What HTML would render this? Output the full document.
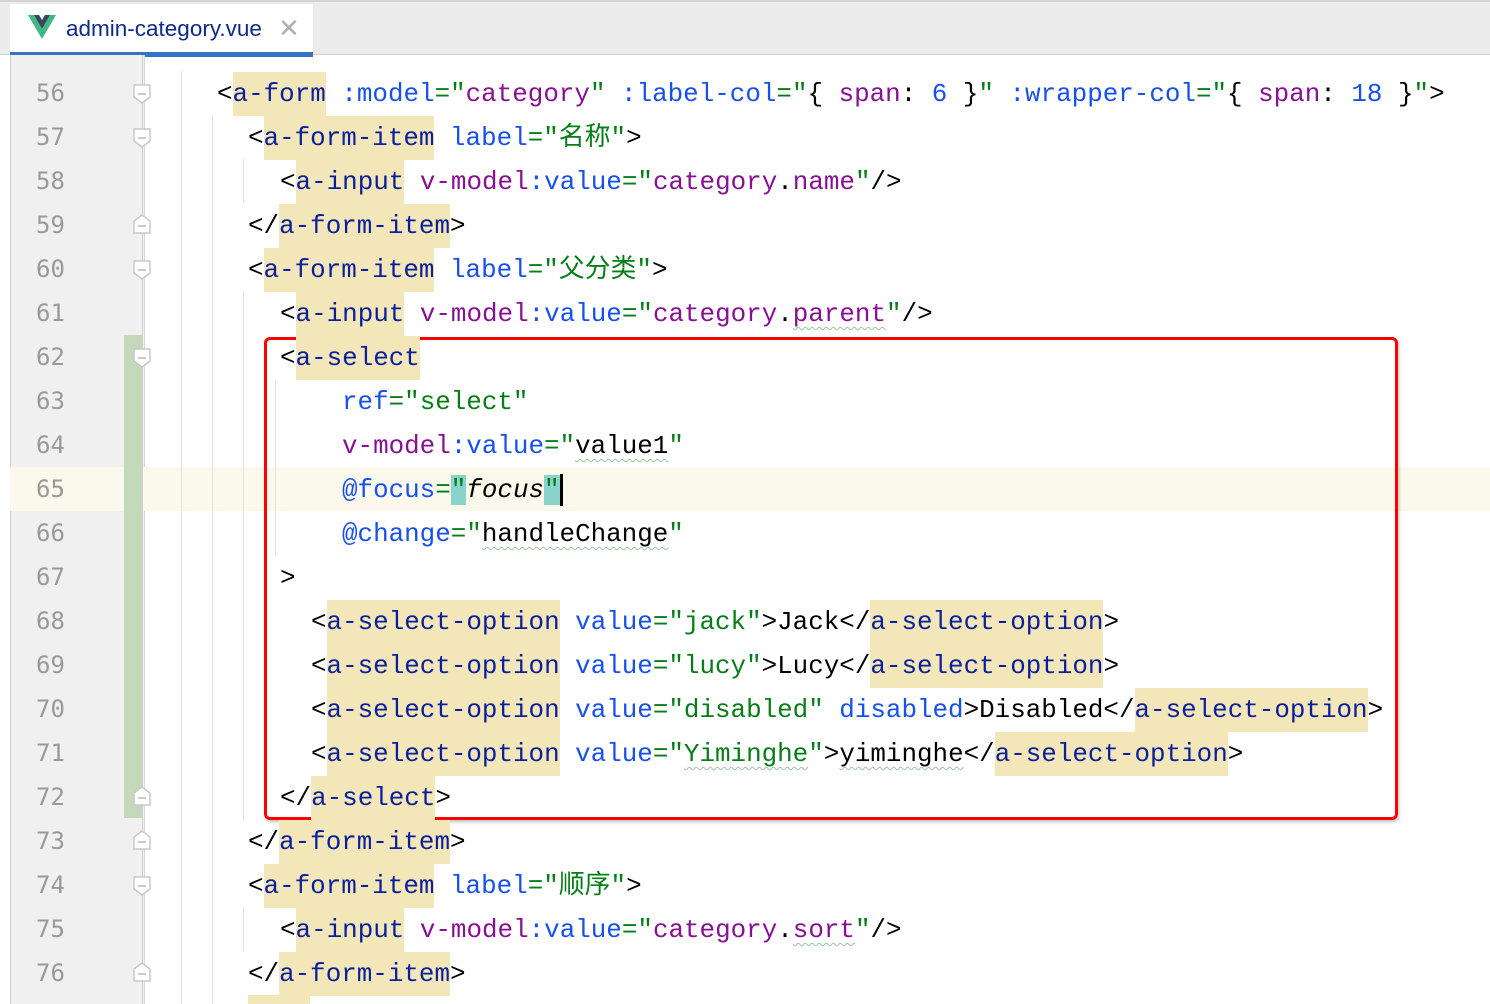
<!DOCTYPE html>
<html><head><meta charset="utf-8"><style>
body{margin:0;width:1490px;height:1004px;overflow:hidden;background:#fff;position:relative;font-family:"Liberation Mono","Noto Sans CJK SC",monospace;}
.tabbar{position:absolute;left:0;top:0;width:1490px;height:55px;background:#ececec;border-top:2px solid #d4d4d4;box-sizing:border-box;border-bottom:1px solid #d0d0d0}
.tab{position:absolute;left:10px;top:2px;width:303px;height:53px;background:#fff;border-bottom:5px solid #3572c6;box-sizing:border-box}
.tab .name{position:absolute;left:56px;top:12px;font-family:"Liberation Sans",sans-serif;font-size:22.5px;color:#0d2a8a}
.tab .x{position:absolute;left:268px;top:9px;font-family:"Liberation Sans",sans-serif;font-size:26px;color:#b0b0b0}
.gutter{position:absolute;left:10px;top:55px;width:133px;height:949px;background:#f0f0f0;border-left:1px solid #cfcfcf;border-right:1px solid #d8d8d8}
.cur{position:absolute;left:10px;top:467px;width:1480px;height:44px;background:#fbf9ec}
.chg{position:absolute;left:124px;top:335px;width:18px;height:483px;background:#c3d9b9}
.ln{position:absolute;left:36px;font-size:24px;color:#999;line-height:44px;font-family:"DejaVu Sans Mono",monospace}
.code{position:absolute;font-size:25.9px;line-height:44px;white-space:pre;color:#000;margin-top:1px}
.t{color:#0a1f9c;background:#f3e6b8;display:inline-block;height:44px}
.a{color:#1750eb}.s{color:#067d17}.p{color:#871094}.n{color:#1750eb}
.w{text-decoration:underline wavy #9bc49b;text-decoration-thickness:1px;text-underline-offset:5px}
.g{position:absolute;width:1px;background:#e2e2e2}
.box{position:absolute;left:264px;top:337px;width:1134px;height:483px;border:3px solid #f00;border-radius:6px;box-sizing:border-box;box-shadow:1px 2px 3px rgba(0,0,0,.25)}
</style></head><body>
<div class="tabbar"><div class="tab">
<svg style="position:absolute;left:18px;top:11px" width="28" height="24" viewBox="0 0 28 24"><path d="M0 0h6l8 14 8-14h6L14 24z" fill="#41b883"/><path d="M6 0h5l3 5 3-5h5L14 14z" fill="#34495e"/></svg>
<span class="name">admin-category.vue</span><span class="x">✕</span></div></div>
<div class="gutter"></div>
<div class="cur"></div>
<div class="chg"></div>
<div style="position:absolute;left:142px;top:55px;width:1px;height:949px;background:#d0d0d0"></div>
<div class="g" style="left:181px;top:71px;height:933px"></div>
<div class="g" style="left:212px;top:115px;height:889px"></div>
<div class="g" style="left:243px;top:159px;height:44px"></div>
<div class="g" style="left:243px;top:291px;height:530px"></div>
<div class="g" style="left:275px;top:380px;height:176px"></div>
<div class="g" style="left:243px;top:907px;height:44px"></div>
<div class="box"></div>

<div class="ln" style="top:71px">56</div><div class="ln" style="top:115px">57</div><div class="ln" style="top:159px">58</div><div class="ln" style="top:203px">59</div><div class="ln" style="top:247px">60</div><div class="ln" style="top:291px">61</div><div class="ln" style="top:335px">62</div><div class="ln" style="top:379px">63</div><div class="ln" style="top:423px">64</div><div class="ln" style="top:467px">65</div><div class="ln" style="top:511px">66</div><div class="ln" style="top:555px">67</div><div class="ln" style="top:599px">68</div><div class="ln" style="top:643px">69</div><div class="ln" style="top:687px">70</div><div class="ln" style="top:731px">71</div><div class="ln" style="top:775px">72</div><div class="ln" style="top:819px">73</div><div class="ln" style="top:863px">74</div><div class="ln" style="top:907px">75</div><div class="ln" style="top:951px">76</div>

<svg style="position:absolute;left:0;top:0" width="160" height="1004">
<g fill="#fff" stroke="#c8c8c8" stroke-width="1.5">
<path d="M134 85h16v12l-8 6-8-6z"/><path d="M134 129h16v12l-8 6-8-6z"/><path d="M134 261h16v12l-8 6-8-6z"/><path d="M134 349h16v12l-8 6-8-6z"/><path d="M134 877h16v12l-8 6-8-6z"/>
<path d="M134 233v-12l8-6 8 6v12z"/><path d="M134 805v-12l8-6 8 6v12z"/><path d="M134 849v-12l8-6 8 6v12z"/><path d="M134 981v-12l8-6 8 6v12z"/>
</g>
<g stroke="#bbb" stroke-width="1.5"><path d="M138 94h8M138 138h8M138 270h8M138 358h8M138 226h8M138 798h8M138 842h8M138 974h8M138 886h8"/></g>
</svg>

<div class="code" style="left:217px;top:71px">&lt;<span class="t">a-form</span> <span class="a">:model</span><span class="s">="</span><span class="p">category</span><span class="s">"</span> <span class="a">:label-col</span><span class="s">="</span>{ <span class="p">span</span>: <span class="n">6</span> }<span class="s">"</span> <span class="a">:wrapper-col</span><span class="s">="</span>{ <span class="p">span</span>: <span class="n">18</span> }<span class="s">"</span>&gt;</div>
<div class="code" style="left:248px;top:115px">&lt;<span class="t">a-form-item</span> <span class="a">label</span><span class="s">="名称"</span>&gt;</div>
<div class="code" style="left:280px;top:159px">&lt;<span class="t">a-input</span> <span class="p">v-model</span><span class="a">:value</span><span class="s">="</span><span class="p">category</span>.<span class="p">name</span><span class="s">"</span>/&gt;</div>
<div class="code" style="left:248px;top:203px">&lt;/<span class="t">a-form-item</span>&gt;</div>
<div class="code" style="left:248px;top:247px">&lt;<span class="t">a-form-item</span> <span class="a">label</span><span class="s">="父分类"</span>&gt;</div>
<div class="code" style="left:280px;top:291px">&lt;<span class="t">a-input</span> <span class="p">v-model</span><span class="a">:value</span><span class="s">="</span><span class="p">category</span>.<span class="p w">parent</span><span class="s">"</span>/&gt;</div>
<div class="code" style="left:280px;top:335px">&lt;<span class="t">a-select</span></div>
<div class="code" style="left:342px;top:379px"><span class="a">ref</span><span class="s">="select"</span></div>
<div class="code" style="left:342px;top:423px"><span class="p">v-model</span><span class="a">:value</span><span class="s">="</span><span class="w">value1</span><span class="s">"</span></div>
<div class="code" style="left:342px;top:467px"><span class="a">@focus</span><span class="s">=</span><span class="s" style="background:#8ad3cc">"</span><i>focus</i><span class="s" style="background:#8ad3cc">"</span><span style="display:inline-block;width:3px;height:32px;background:#000;vertical-align:middle"></span></div>
<div class="code" style="left:342px;top:511px"><span class="a">@change</span><span class="s">="</span><span class="w">handleChange</span><span class="s">"</span></div>
<div class="code" style="left:280px;top:555px">&gt;</div>
<div class="code" style="left:311px;top:599px">&lt;<span class="t">a-select-option</span> <span class="a">value</span><span class="s">="jack"</span>&gt;Jack&lt;/<span class="t">a-select-option</span>&gt;</div>
<div class="code" style="left:311px;top:643px">&lt;<span class="t">a-select-option</span> <span class="a">value</span><span class="s">="lucy"</span>&gt;Lucy&lt;/<span class="t">a-select-option</span>&gt;</div>
<div class="code" style="left:311px;top:687px">&lt;<span class="t">a-select-option</span> <span class="a">value</span><span class="s">="disabled"</span> <span class="a">disabled</span>&gt;Disabled&lt;/<span class="t">a-select-option</span>&gt;</div>
<div class="code" style="left:311px;top:731px">&lt;<span class="t">a-select-option</span> <span class="a">value</span><span class="s">="<span class="w">Yiminghe</span>"</span>&gt;<span class="w">yiminghe</span>&lt;/<span class="t">a-select-option</span>&gt;</div>
<div class="code" style="left:280px;top:775px">&lt;/<span class="t">a-select</span>&gt;</div>
<div class="code" style="left:248px;top:819px">&lt;/<span class="t">a-form-item</span>&gt;</div>
<div class="code" style="left:248px;top:863px">&lt;<span class="t">a-form-item</span> <span class="a">label</span><span class="s">="顺序"</span>&gt;</div>
<div class="code" style="left:280px;top:907px">&lt;<span class="t">a-input</span> <span class="p">v-model</span><span class="a">:value</span><span class="s">="</span><span class="p">category</span>.<span class="p w">sort</span><span class="s">"</span>/&gt;</div>
<div class="code" style="left:248px;top:951px">&lt;/<span class="t">a-form-item</span>&gt;</div>
<div style="position:absolute;left:248px;top:995px;width:62px;height:9px;background:#f3e6b8"></div>
</body></html>
